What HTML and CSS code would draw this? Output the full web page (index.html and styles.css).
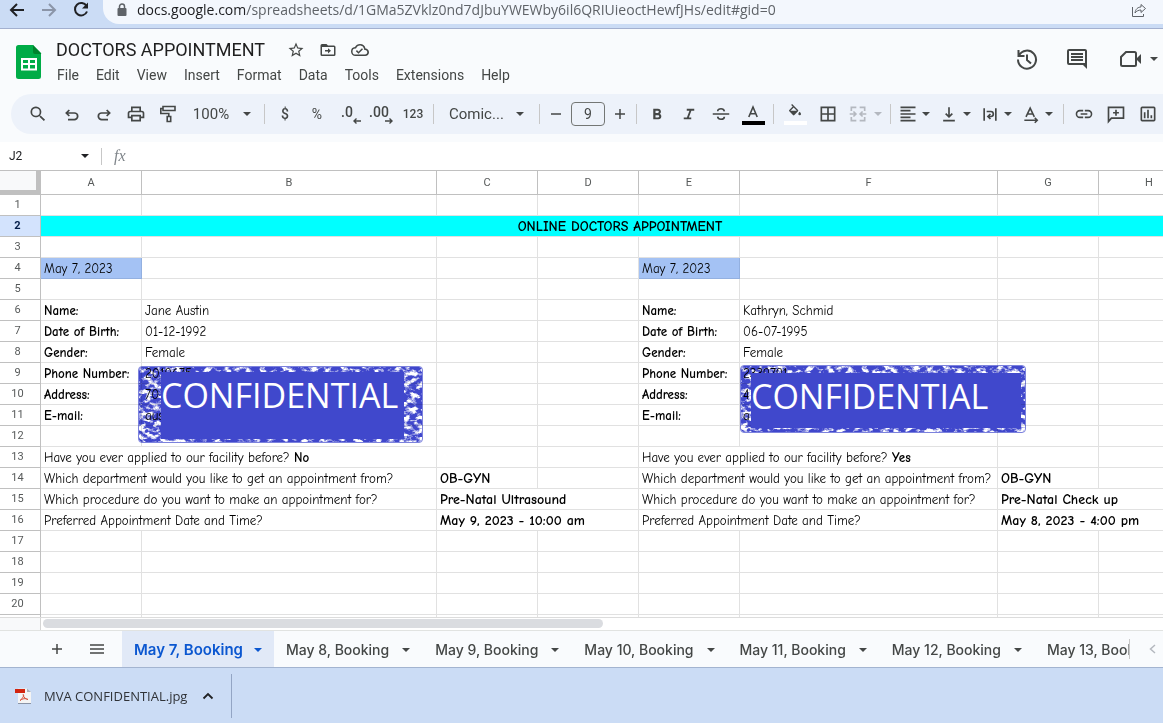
FILE: index.html
```html
<!DOCTYPE html>
<html lang="en">
<head>
<meta charset="utf-8">
<title>DOCTORS APPOINTMENT</title>
<link rel="stylesheet" href="styles.css">
</head>
<body>
<div class="browser">
  <button class="nav" aria-label="Back"><svg class="i20" viewBox="0 0 20 20"><path d="M17 10H4M10 4l-6 6 6 6" fill="none" stroke="#202124" stroke-width="2"/></svg></button>
  <button class="nav" aria-label="Forward"><svg class="i20" viewBox="0 0 20 20"><path d="M3 10h13M10 4l6 6-6 6" fill="none" stroke="#8b95a8" stroke-width="2"/></svg></button>
  <button class="nav" aria-label="Reload"><svg class="i20" viewBox="0 0 20 20"><path d="M15.500 6A6.200 6.200 0 1 0 16 11.500" fill="none" stroke="#202124" stroke-width="2"/><path d="M17 2.500v6h-6z" fill="#202124"/></svg></button>
  <div class="address">
    <svg class="lock" viewBox="0 0 10 14"><path d="M2.500 6V3.500a2.500 2.500 0 0 1 5 0V6" fill="none" stroke="#5f6368" stroke-width="1.500"/><rect x="0.500" y="5" width="9" height="8" rx="1" fill="#5f6368"/></svg>
    <span class="url"><span class="host">docs.google.com</span>/spreadsheets/d/1GMa5ZVklz0nd7dJbuYWEWby6il6QRIUieoctHewfJHs/edit#gid=0</span>
    <button class="share" aria-label="Share"><svg class="i16" viewBox="0 0 16 16"><path d="M1.500 5v9.500h11V12M4 11c.5-4 3-6 6-6V2.500l4.500 4L10 10.500V8C7.500 8 5.500 9 4 11z" fill="none" stroke="#5f6368"/></svg></button>
  </div>
</div>

<header class="app">
  <svg class="logo" viewBox="0 0 26 36"><path d="M2.500 1H17l8 8v23.500a2.500 2.500 0 0 1-2.500 2.500h-20A2.500 2.500 0 0 1 0 32.500v-29A2.500 2.500 0 0 1 2.500 1z" fill="#00ac47"/><path d="M17 1l8.500 9H19a2 2 0 0 1-2-2z" fill="#00832d"/><path d="M5 14h16v12.500H5zM7 16v3h5v-3zm7 0v3h5v-3zm-7 5v3.500h5V21zm7 0v3.500h5V21z" fill="#fff" fill-rule="evenodd"/></svg>
  <div class="titles">
    <div class="title-row">
      <h1>DOCTORS APPOINTMENT</h1>
      <button aria-label="Star"><svg class="i18" viewBox="0 0 24 24"><path d="M22 9.240l-7.190-.62L12 2 9.190 8.630 2 9.240l5.460 4.730L5.820 21 12 17.270 18.180 21l-1.630-7.030zM12 15.400l-3.760 2.270 1-4.280-3.320-2.880 4.380-.38L12 6.100l1.710 4.040 4.380.38-3.320 2.880 1 4.280z"/></svg></button>
      <button aria-label="Move"><svg class="i18" viewBox="0 0 24 24"><path d="M20 6h-8l-2-2H4a2 2 0 0 0-2 2v12a2 2 0 0 0 2 2h16a2 2 0 0 0 2-2V8a2 2 0 0 0-2-2zm0 12H4V8h16zM12 9.500l4 3.500-4 3.500V14H8v-2h4z"/></svg></button>
      <button aria-label="Saved"><svg class="i18" viewBox="0 0 24 24"><path d="M19.350 10.040A7.490 7.490 0 0 0 12 4C9.110 4 6.600 5.640 5.350 8.040A5.990 5.990 0 0 0 0 14c0 3.310 2.690 6 6 6h13c2.760 0 5-2.240 5-5 0-2.640-2.050-4.780-4.650-4.960zM19 18H6a4 4 0 0 1-.4-7.980l1.070-.11.500-.95A5.500 5.500 0 0 1 17.400 10.430l.3 1.500 1.530.11A3 3 0 0 1 19 18zm-9-3.820l-2.090-2.090L6.500 13.500 10 17l6-6-1.410-1.410z"/></svg></button>
    </div>
    <nav class="menu"><button>File</button><button>Edit</button><button>View</button><button>Insert</button><button>Format</button><button>Data</button><button>Tools</button><button>Extensions</button><button>Help</button></nav>
  </div>
  <div class="actions">
    <button aria-label="History"><svg class="i24" viewBox="0 0 24 24"><path d="M3.500 3v6h6M4 8.500A9 9 0 1 1 3 12.500M12 7.500V13l4 3.500" fill="none" stroke="#444746" stroke-width="2"/></svg></button>
    <button aria-label="Comments"><svg class="i24" viewBox="0 0 24 24"><path d="M21.990 4c0-1.100-.89-2-1.990-2H4a2 2 0 0 0-2 2v12a2 2 0 0 0 2 2h14l4 4zM20 16H4V4h16zM6 12h12v2H6zm0-3h12v2H6zm0-3h12v2H6z"/></svg></button>
    <button class="meet" aria-label="Video call"><svg class="i24" viewBox="0 0 24 24"><path d="M7 5h8.500a1.500 1.500 0 0 1 1.500 1.500v11a1.500 1.500 0 0 1-1.500 1.500h-12A1.500 1.500 0 0 1 2 17.500V10z" fill="none" stroke="#444746" stroke-width="2"/><path d="M17 12l5-5v10z"/></svg><i class="caret"></i></button>
  </div>
</header>

<div class="toolbar-wrap">
<div class="toolbar">
  <button class="tool first" aria-label="Search"><svg class="i20" viewBox="0 0 24 24"><path d="M15.500 14h-.79l-.28-.27A6.500 6.500 0 1 0 13.730 14.430l.27.28v.79l5 4.990L20.490 19zm-6 0a4.500 4.500 0 1 1 0-9 4.500 4.500 0 0 1 0 9z"/></svg></button>
  <button class="tool" aria-label="Undo"><svg class="i16" viewBox="0 0 24 24"><path d="M8 6l-4.500 4.500L8 15M4 10.500H15.500a5 5 0 0 1 0 10H6" fill="none" stroke="#444746" stroke-width="2.600"/></svg></button>
  <button class="tool" aria-label="Redo"><svg class="i16" viewBox="0 0 24 24"><path d="M16 6l4.500 4.500L16 15M20 10.500H8.500a5 5 0 0 0 0 10H18" fill="none" stroke="#444746" stroke-width="2.600"/></svg></button>
  <button class="tool" aria-label="Print"><svg class="i20" viewBox="0 0 24 24"><path d="M19 8h-1V3H6v5H5a3 3 0 0 0-3 3v6h4v4h12v-4h4v-6a3 3 0 0 0-3-3zM8 5h8v3H8zm8 14H8v-4h8zm2-4v-2H6v2H4v-4a1 1 0 0 1 1-1h14a1 1 0 0 1 1 1v4z"/></svg></button>
  <button class="tool" aria-label="Paint format"><svg class="i20" viewBox="0 0 20 20"><path d="M5 2.500h12v4H5zM5 4.500H2.800V9.500h8V12M9.200 12.500h3.500v5H9.200z" fill="none" stroke="#444746" stroke-width="1.600"/></svg></button>
  <button class="zoomer">100%<i class="caret"></i></button>
  <span class="sep"></span>
  <button class="tool num">$</button>
  <button class="tool num light">%</button>
  <button class="tool num dec">.0<svg class="arr" viewBox="0 0 8 6"><path d="M8 3H1M3.500.5L1 3l2.500 2.500" fill="none" stroke="#444746" stroke-width="1.400"/></svg></button>
  <button class="tool num dec">.00<svg class="arr" viewBox="0 0 8 6"><path d="M0 3h7M4.500.5L7 3 4.500 5.500" fill="none" stroke="#444746" stroke-width="1.400"/></svg></button>
  <button class="tool small">123</button>
  <span class="sep"></span>
  <button class="fontbox">Comic...<i class="caret"></i></button>
  <span class="sep"></span>
  <button class="step" aria-label="Decrease font size"><svg class="i16" viewBox="0 0 16 16"><path d="M3 8h10" stroke="#444746" stroke-width="1.500"/></svg></button>
  <input class="size" aria-label="Font size" value="9">
  <button class="step" aria-label="Increase font size"><svg class="i16" viewBox="0 0 16 16"><path d="M3 8h10M8 3v10" stroke="#444746" stroke-width="1.500"/></svg></button>
  <span class="sep"></span>
  <button class="tool" aria-label="Bold"><svg class="i18" viewBox="0 0 24 24"><path d="M15.600 11.790c.97-.67 1.650-1.770 1.650-2.790 0-2.260-1.750-4-4-4H7v14h7.040c2.090 0 3.710-1.700 3.710-3.790 0-1.520-.86-2.820-2.150-3.420zM10 7.500h3a1.500 1.500 0 0 1 0 3h-3zm3.500 9H10v-3h3.500a1.500 1.500 0 0 1 0 3z"/></svg></button>
  <button class="tool" aria-label="Italic"><svg class="i18" viewBox="0 0 24 24"><path d="M9 5v2.500h3.600l-3.400 9H5V19h10v-2.500h-3.200l3.400-9H19V5z"/></svg></button>
  <button class="tool" aria-label="Strikethrough"><svg class="i18" viewBox="0 0 24 24"><path d="M1 12h22M16.500 8.500C16 6 14.500 5 12 5 9.500 5 7.600 6.200 7.600 8.300M7.500 15.500c.4 2.500 2 3.500 4.500 3.500s4.500-1 4.500-3.500" fill="none" stroke="#444746" stroke-width="2.200"/></svg></button>
  <button class="tool swatch" aria-label="Text color"><svg class="i16" viewBox="0 0 16 16"><path d="M3.800 13L8 3l4.200 10M5.300 9.800h5.400" fill="none" stroke="#444746" stroke-width="1.600"/></svg><i class="bar black"></i></button>
  <span class="sep"></span>
  <button class="tool swatch fill" aria-label="Fill color"><svg class="i16" viewBox="0 0 24 24"><path d="M16.560 8.940L7.620 0 6.210 1.410l2.380 2.380-5.150 5.150a1.490 1.490 0 0 0 0 2.120l5.500 5.500a1.500 1.500 0 0 0 2.120 0l5.500-5.500c.59-.58.59-1.530 0-2.120zM5.210 10L10 5.210 14.790 10zM19 11.500s-2 2.170-2 3.500a2 2 0 0 0 4 0c0-1.330-2-3.500-2-3.500z"/></svg><i class="bar white"></i></button>
  <button class="tool" aria-label="Borders"><svg class="i20" viewBox="0 0 24 24"><path d="M4 4h16v16H4zM12 4v16M4 12h16" fill="none" stroke="#444746" stroke-width="2"/></svg></button>
  <button class="drop merge" aria-label="Merge cells" disabled><svg class="i20" viewBox="0 0 24 24"><path d="M10 4H4v4.500M4 15.500V20h6M14 4h6v4.500M20 15.500V20h-6M2 12h7M15 12h7M6.500 9l3 3-3 3M17.500 9l-3 3 3 3" fill="none" stroke="#b4b8bf" stroke-width="2"/></svg><i class="caret"></i></button>
  <span class="sep"></span>
  <button class="drop" aria-label="Horizontal align"><svg class="i20" viewBox="0 0 24 24"><path d="M3 4h18M3 8h12M3 12h18M3 16h12M3 20h18" stroke="#444746" stroke-width="2"/></svg><i class="caret"></i></button>
  <button class="drop" aria-label="Vertical align"><svg class="i20" viewBox="0 0 24 24"><path d="M12 4v11.500M8 11.500l4 4 4-4M5 20h14" fill="none" stroke="#444746" stroke-width="2"/></svg><i class="caret"></i></button>
  <button class="drop" aria-label="Text wrapping"><svg class="i20" viewBox="0 0 24 24"><path d="M5 5v15M19 5v15M8 9h5a3 3 0 0 1 0 6h-3M12.500 12L9.500 15l3 3" fill="none" stroke="#444746" stroke-width="2"/></svg><i class="caret"></i></button>
  <button class="drop" aria-label="Text rotation"><svg class="i20" viewBox="0 0 24 24"><path d="M6 15.500L11 5l5 10.500M8 12h6M4 19.500h15M16.500 16.500l3 3-3 3" fill="none" stroke="#444746" stroke-width="1.900"/></svg><i class="caret"></i></button>
  <span class="sep"></span>
  <button class="tool" aria-label="Insert link"><svg class="i20" viewBox="0 0 24 24"><path d="M3.900 12A3.100 3.100 0 0 1 7 8.900h4V7H7a5 5 0 0 0 0 10h4v-1.900H7A3.100 3.100 0 0 1 3.900 12zM8 13h8v-2H8zm9-6h-4v1.900h4a3.100 3.100 0 0 1 0 6.200h-4V17h4a5 5 0 0 0 0-10z"/></svg></button>
  <button class="tool" aria-label="Insert comment"><svg class="i20" viewBox="0 0 24 24"><path d="M3 21V4h18v13H6.500zM12 7v7M8.500 10.500h7" fill="none" stroke="#444746" stroke-width="2"/></svg></button>
  <button class="tool" aria-label="Insert chart"><svg class="i20" viewBox="0 0 24 24"><rect x="4" y="4" width="16" height="16" rx="1" fill="none" stroke="#444746" stroke-width="2"/><path d="M8 10v7M12 7v10M16 13.500V17" stroke="#444746" stroke-width="2"/></svg></button>
</div>
</div>

<div class="formula">
  <button class="namebox">J2<i class="caret"></i></button>
  <span class="fx">fx</span>
  <input class="formula-input" aria-label="Formula">
</div>

<main class="sheet">
  <table>
    <colgroup><col class="c-head"><col class="c-std"><col class="c-b"><col class="c-std"><col class="c-std"><col class="c-std"><col class="c-f"><col class="c-std"><col class="c-std"></colgroup>
    <thead><tr><th class="corner"></th><th>A</th><th>B</th><th>C</th><th>D</th><th>E</th><th>F</th><th>G</th><th>H</th></tr></thead>
    <tbody>
      <tr><th>1</th><td></td><td></td><td></td><td></td><td></td><td></td><td></td><td></td></tr>
      <tr><th class="current">2</th><td class="banner" colspan="8">ONLINE DOCTORS APPOINTMENT</td></tr>
      <tr><th>3</th><td></td><td></td><td></td><td></td><td></td><td></td><td></td><td></td></tr>
      <tr><th>4</th><td class="date">May 7, 2023</td><td></td><td></td><td></td><td class="date">May 7, 2023</td><td></td><td></td><td></td></tr>
      <tr><th>5</th><td></td><td></td><td></td><td></td><td></td><td></td><td></td><td></td></tr>
      <tr><th>6</th><td><b>Name:</b></td><td>Jane Austin</td><td></td><td></td><td><b>Name:</b></td><td>Kathryn, Schmid</td><td></td><td></td></tr>
      <tr><th>7</th><td><b>Date of Birth:</b></td><td>01-12-1992</td><td></td><td></td><td><b>Date of Birth:</b></td><td>06-07-1995</td><td></td><td></td></tr>
      <tr><th>8</th><td><b>Gender:</b></td><td>Female</td><td></td><td></td><td><b>Gender:</b></td><td>Female</td><td></td><td></td></tr>
      <tr><th>9</th><td><b>Phone Number:</b></td><td>2019675</td><td></td><td></td><td><b>Phone Number:</b></td><td>2339791</td><td></td><td></td></tr>
      <tr><th>10</th><td><b>Address:</b></td><td>70</td><td></td><td></td><td><b>Address:</b></td><td>4</td><td></td><td></td></tr>
      <tr><th>11</th><td><b>E-mail:</b></td><td>aus</td><td></td><td></td><td><b>E-mail:</b></td><td>a</td><td></td><td></td></tr>
      <tr><th>12</th><td></td><td></td><td></td><td></td><td></td><td></td><td></td><td></td></tr>
      <tr><th>13</th><td colspan="2">Have you ever applied to our facility before? <b>No</b></td><td></td><td></td><td colspan="2">Have you ever applied to our facility before? <b>Yes</b></td><td></td><td></td></tr>
      <tr><th>14</th><td colspan="2">Which department would you like to get an appointment from?</td><td class="answer">OB-GYN</td><td></td><td colspan="2">Which department would you like to get an appointment from?</td><td class="answer">OB-GYN</td><td></td></tr>
      <tr><th>15</th><td colspan="2">Which procedure do you want to make an appointment for?</td><td class="answer" colspan="2">Pre-Natal Ultrasound</td><td colspan="2">Which procedure do you want to make an appointment for?</td><td class="answer" colspan="2">Pre-Natal Check up</td></tr>
      <tr><th>16</th><td colspan="2">Preferred Appointment Date and Time?</td><td class="answer" colspan="2">May 9, 2023 - 10:00 am</td><td colspan="2">Preferred Appointment Date and Time?</td><td class="answer" colspan="2">May 8, 2023 - 4:00 pm</td></tr>
      <tr><th>17</th><td></td><td></td><td></td><td></td><td></td><td></td><td></td><td></td></tr>
      <tr><th>18</th><td></td><td></td><td></td><td></td><td></td><td></td><td></td><td></td></tr>
      <tr><th>19</th><td></td><td></td><td></td><td></td><td></td><td></td><td></td><td></td></tr>
      <tr><th>20</th><td></td><td></td><td></td><td></td><td></td><td></td><td></td><td></td></tr>
      <tr><th></th><td></td><td></td><td></td><td></td><td></td><td></td><td></td><td></td></tr>
    </tbody>
  </table>
  <div class="stamp stamp-left">
    <svg class="ink" aria-hidden="true"><defs><filter id="ink" x="0" y="0" width="100%" height="100%" color-interpolation-filters="sRGB"><feTurbulence type="fractalNoise" baseFrequency="0.14 0.22" numOctaves="4" seed="7"/><feColorMatrix values="0 0 0 0 0.25  0 0 0 0 0.28  0 0 0 0 0.8  4.5 0 0 0 -1.5"/><feComposite in2="SourceGraphic" operator="in"/></filter></defs><rect width="100%" height="100%" rx="3" fill="#000" filter="url(#ink)"/></svg>
    <div class="plate">CONFIDENTIAL</div>
  </div>
  <div class="stamp stamp-right">
    <svg class="ink" aria-hidden="true"><rect width="100%" height="100%" rx="3" fill="#000" filter="url(#ink)"/></svg>
    <div class="plate">CONFIDENTIAL</div>
  </div>
</main>
<div class="scroll"><div class="gutter"></div><div class="track"><div class="thumb"></div></div></div>

<footer class="tabs">
  <button class="tab-tool" aria-label="Add sheet"><svg class="i16" viewBox="0 0 16 16"><path d="M3 8h10M8 3v10" stroke="#444746" stroke-width="1.500"/></svg></button>
  <button class="tab-tool" aria-label="All sheets"><svg class="i16" viewBox="0 0 16 16"><path d="M1 4h14M1 8h14M1 12h14" stroke="#444746" stroke-width="1.600"/></svg></button>
  <div class="tab-list">
    <button class="tab active">May 7, Booking<i class="caret"></i></button>
    <button class="tab">May 8, Booking<i class="caret"></i></button>
    <button class="tab">May 9, Booking<i class="caret"></i></button>
    <button class="tab">May 10, Booking<i class="caret"></i></button>
    <button class="tab">May 11, Booking<i class="caret"></i></button>
    <button class="tab">May 12, Booking<i class="caret"></i></button>
    <button class="tab">May 13, Booking<i class="caret"></i></button>
  </div>
  <span class="tab-edge"></span>
  <button class="tab-prev" aria-label="Scroll tabs left"><svg class="i16" viewBox="0 0 16 16"><path d="M10 4L5.500 8l4.500 4" fill="none" stroke="#b4b8bf" stroke-width="1.500"/></svg></button>
</footer>

<div class="downloads">
  <button class="file"><svg class="i16" viewBox="0 0 16 16"><path d="M3 .5h9l4 3.500v11.500H3z" fill="#f4f4f4"/><path d="M12 .5L16 4h-4z" fill="#a9b0bb"/><path d="M3 15.500h13" stroke="#8a94a6"/><path d="M0 1h10v4H0z" fill="#d3250f"/><path d="M8 6.500c1.500 0 .5 3.500-3 6 2-2 6-2.500 8-1-2-.2-4.500-2-5-5z" fill="none" stroke="#d9553f"/></svg><span>MVA CONFIDENTIAL.jpg</span><svg class="chev" viewBox="0 0 12 12"><path d="M1.500 8.500L6 4l4.500 4.500" fill="none" stroke="#202124" stroke-width="1.800"/></svg></button>
</div>
</body>
</html>
```
FILE: styles.css
```css
* { box-sizing: border-box; }
body {
  margin: 0;
  height: 100vh;
  display: flex;
  flex-direction: column;
  overflow: hidden;
  background: #f9fbfd;
  color: #444746;
  font: 14px/20px Roboto, "Liberation Sans", sans-serif;
}
button {
  display: inline-flex;
  align-items: center;
  justify-content: center;
  flex: none;
  padding: 0;
  border: 0;
  background: none;
  color: inherit;
  font: inherit;
  white-space: nowrap;
}
input { border: 0; padding: 0; background: none; color: inherit; font: inherit; }
svg { display: block; flex: none; fill: #444746; }
.i16 { width: 16px; height: 16px; }
.i18 { width: 18px; height: 18px; }
.i20 { width: 20px; height: 20px; }
.i24 { width: 24px; height: 24px; }
.caret {
  flex: none;
  border: 4px solid transparent;
  border-top-color: currentColor;
  border-bottom-width: 0;
}

/* Browser bar */
.browser {
  display: flex;
  flex: none;
  gap: 12px;
  height: 29px;
  padding: 0 0 4px 7px;
  background: #cbdcf5;
  border-bottom: 1px solid #a3b0cf;
}
.nav { width: 20px; height: 20px; }
.address {
  flex: 1;
  display: flex;
  align-items: center;
  min-width: 0;
  height: 24px;
  padding: 0 16px 4px 14px;
  border-radius: 0 0 0 16px;
  background: #f3f7fd;
}
.lock { width: 10px; height: 14px; }
.url {
  flex: 1;
  margin-left: 10px;
  color: #5f6368;
  font: 14px/20px "Open Sans", "Noto Sans", sans-serif;
  white-space: nowrap;
}
.host { color: #202124; }

/* App header */
.app { display: flex; flex: none; height: 65px; padding: 8px 5px 0 16px; }
.logo { width: 26px; height: 36px; margin-top: 7px; }
.titles { margin-left: 14px; }
.title-row { display: flex; align-items: center; height: 26px; gap: 14px; }
h1 {
  margin: 0 8px 0 0;
  color: #1f1f1f;
  font: 400 18px/24px Roboto, sans-serif;
}
.menu { display: flex; gap: 17px; padding: 2px 0 0 1px; }
.actions { display: flex; flex: 1; justify-content: flex-end; gap: 26px; height: 44px; }
.meet { gap: 7px; margin-left: 4px; }

/* Toolbar */
.toolbar-wrap { flex: none; padding: 0 0 8px 11px; }
.toolbar {
  display: flex;
  align-items: center;
  height: 40px;
  padding-left: 11px;
  overflow: hidden;
  border-radius: 20px 0 0 20px;
  background: #edf2fa;
}
.tool { width: 32px; height: 32px; }
.first { margin-right: 2px; }
.sep { flex: none; width: 1px; height: 20px; margin: 0 4px; background: #c7c7c7; }
.zoomer { width: 76px; gap: 14px; font-size: 15px; }
.num { font-size: 14px; font-weight: 500; }
.light { font-weight: 400; }
.dec { position: relative; padding: 0 4px 4px 0; }
.arr { position: absolute; right: 4px; bottom: 6px; width: 8px; height: 6px; }
.small { font-size: 12px; font-weight: 500; }
.fontbox { width: 97px; justify-content: space-between; padding: 0 11px; font-size: 15px; }
.step { width: 24px; height: 32px; }
.size {
  flex: none;
  width: 34px;
  height: 24px;
  margin: 0 3px;
  border: 1px solid #747775;
  border-radius: 4px;
  text-align: center;
}
.swatch { flex-direction: column; gap: 1px; }
.bar { width: 23px; height: 4px; }
.black { background: #000; }
.white { background: #fff; }
.fill { width: 34px; }
.drop { width: 41px; height: 32px; gap: 4px; padding-right: 4px; }
.merge { width: 42px; gap: 6px; padding: 0; color: #b4b8bf; }

/* Formula bar */
.formula { display: flex; flex: none; align-items: center; height: 28px; background: #fff; }
.namebox {
  width: 102px;
  height: 17px;
  justify-content: space-between;
  padding: 0 12px 0 9px;
  border-right: 1px solid #c7c7c7;
  color: #202124;
  font: 12px/17px Roboto, sans-serif;
}
.fx { margin-left: 12px; color: #80868b; font: italic 16px/20px "Liberation Serif", serif; }
.formula-input { flex: 1; margin-left: 10px; }

/* Grid */
.sheet {
  position: relative;
  flex: 1;
  min-height: 0;
  overflow: hidden;
  border-top: 1px solid #c0c0c0;
  border-bottom: 1px solid #dcdcdc;
  background: #fff;
}
table { width: 1200px; table-layout: fixed; border-collapse: separate; border-spacing: 0; }
.c-head { width: 41px; }
.c-std { width: 101px; }
.c-b { width: 295px; }
.c-f { width: 258px; }
th {
  height: 21px;
  padding: 0;
  border: solid #c0c0c0;
  border-width: 0 1px 1px 0;
  background: #fff;
  color: #575a5a;
  font: 400 11px/16px Roboto, sans-serif;
}
tbody th { padding-right: 5px; }
thead th { height: 24px; }
.corner { border-width: 0 5px 5px 0; background: #f8f9fa; }
.current { background: #d3e3fd; color: #041e49; font-weight: 700; }
td {
  height: 21px;
  padding: 1px 3px 0;
  border: solid #e1e1e1;
  border-width: 0 1px 1px 0;
  color: #000;
  font: 13px/19px "Comic Sans MS", "Comic Neue", "Open Sans", sans-serif;
  white-space: nowrap;
}
.answer { font-size: 14px; font-weight: 700; }
.banner { background: #00ffff; font-size: 14px; font-weight: 700; text-align: center; }
.date { background: #a4c2f4; border-color: #93b0e0; }

/* Stamps laid over the cells */
.stamp { position: absolute; display: flex; }
.stamp-left { left: 138px; top: 195px; width: 285px; height: 77px; padding: 6px 19px 4px 23px; }
.stamp-right { left: 740px; top: 194px; width: 286px; height: 68px; padding: 8px 5px 5px 11px; }
.ink {
  position: absolute;
  inset: 0;
  width: 100%;
  height: 100%;
  border: 1px solid #7c82dd;
  border-radius: 4px;
  mix-blend-mode: multiply;
}
.plate {
  position: relative;
  flex: 1;
  background: #4048cc;
  color: #fff;
  font: 400 34px/46px "Open Sans", sans-serif;
}

.scroll { display: flex; flex: none; height: 12px; background: #fff; }
.gutter { width: 41px; border-right: 1px solid #d5d5d5; background: #f8f9fa; }
.track { flex: 1; padding: 1px 0 0 2px; }
.thumb { width: 50%; height: 9px; border-radius: 5px; background: #dadce0; }

/* Sheet tabs */
.tabs { display: flex; flex: none; align-items: center; height: 38px; padding-left: 37px; border-top: 1px solid #e1e3e1; border-bottom: 1px solid #a3b4d0; }
.tab-tool { width: 40px; height: 36px; }
.tab-list { display: flex; flex: 1; align-self: stretch; min-width: 0; margin-left: 5px; overflow: hidden; }
.tab { gap: 13px; padding: 2px 13px 0 12px; font: 500 14px/20px Inter, sans-serif; }
.active { gap: 11px; padding-right: 12px; background: #e1e9f7; color: #0b57d0; font-size: 15px; font-weight: 600; }
.tab-edge { flex: none; width: 1px; height: 20px; background: #c7c7c7; }
.tab-prev { width: 33px; padding-left: 12px; }

/* Downloads */
.downloads { display: flex; flex: none; align-items: center; height: 55px; background: #cbdcf5; }
.file {
  height: 44px;
  padding: 0 17px 0 15px;
  border-right: 1px solid #93a5c4;
  color: #303338;
  font: 13px/20px "Open Sans", "Noto Sans", sans-serif;
}
.file span { margin: 0 15px 0 13px; }
.chev { width: 12px; height: 12px; }
```
